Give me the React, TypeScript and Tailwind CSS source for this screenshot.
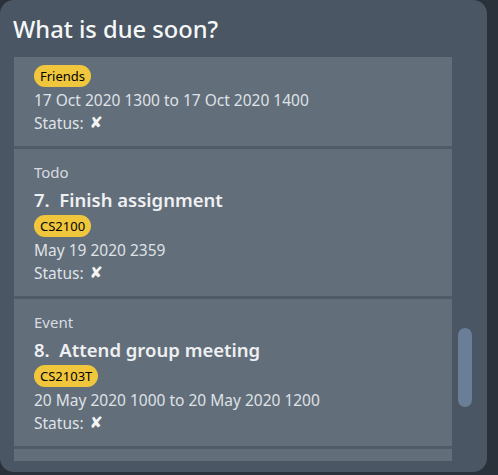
import React from "react";

type Item = {
  kind?: string;
  title?: string;
  tag: string;
  date: string;
};

const ITEMS: Item[] = [
  { kind: "Todo", title: "7.  Finish assignment", tag: "CS2100", date: "May 19 2020 2359" },
  {
    kind: "Event",
    title: "8.  Attend group meeting",
    tag: "CS2103T",
    date: "20 May 2020 1000 to 20 May 2020 1200",
  },
];

const FONT = { fontFamily: '"Segoe UI", "Noto Sans", sans-serif' };

function Tag({ label }: { label: string }) {
  return (
    <div className="flex">
      <span className="h-[22px] px-[6px] rounded-[11px] bg-[#f0c73c] text-black text-[13px] leading-[22px]">
        {label}
      </span>
    </div>
  );
}

function Details({ tag, date }: { tag: string; date: string }) {
  return (
    <>
      <Tag label={tag} />
      <div className="text-[15.5px] leading-[22px] text-[#dfe2e6] mt-[2px]">{date}</div>
      <div className="text-[15.5px] leading-[22px] text-[#dfe2e6] mt-[1px] flex items-center gap-[6px]">
        <span>Status:</span>
        <span className="text-[#f4f4f4] text-[16px] font-bold" style={{ fontFamily: '"DejaVu Sans", sans-serif' }}>
          ✘
        </span>
      </div>
    </>
  );
}

function Card({ item }: { item: Item }) {
  return (
    <div className="h-[150px] shrink-0 bg-[#636e7b] border-t-[3px] border-[#505b67] pl-[20px] pt-[13px]">
      <div className="text-[15px] leading-[20px] text-[#d8dce0]">{item.kind}</div>
      <div className="text-[18.5px] leading-[28px] font-semibold text-[#eef0f2] mt-[4px] whitespace-pre">
        {item.title}
      </div>
      <div className="mt-[1px]">
        <Details tag={item.tag} date={item.date} />
      </div>
    </div>
  );
}

export default function App() {
  return (
    <div className="w-[498px] h-[475px] bg-[#2a313b]" style={FONT}>
      <div className="w-[487px] h-[472px] rounded-[14px] bg-[#4a5663] flex flex-col">
        <div className="h-[57px] pl-[13px] pt-[13px]">
          <h1 className="text-[23.7px] leading-[32px] font-medium text-[#f6f7f8]">What is due soon?</h1>
        </div>
        <div className="flex pl-[14px]">
          <div className="w-[438px] h-[404px] overflow-hidden flex flex-col">
            <div className="h-[89px] shrink-0 bg-[#636e7b] pl-[20px] pt-[8px]">
              <Details tag="Friends" date="17 Oct 2020 1300 to 17 Oct 2020 1400" />
            </div>
            {ITEMS.map((item, i) => (
              <Card key={i} item={item} />
            ))}
            <div className="h-[15px] shrink-0 bg-[#636e7b] border-t-[3px] border-[#505b67]" />
          </div>
          <div className="pl-[6px] pt-[271px]">
            <div className="w-[14px] h-[79px] rounded-full bg-[#6a7e97]" />
          </div>
        </div>
      </div>
    </div>
  );
}
